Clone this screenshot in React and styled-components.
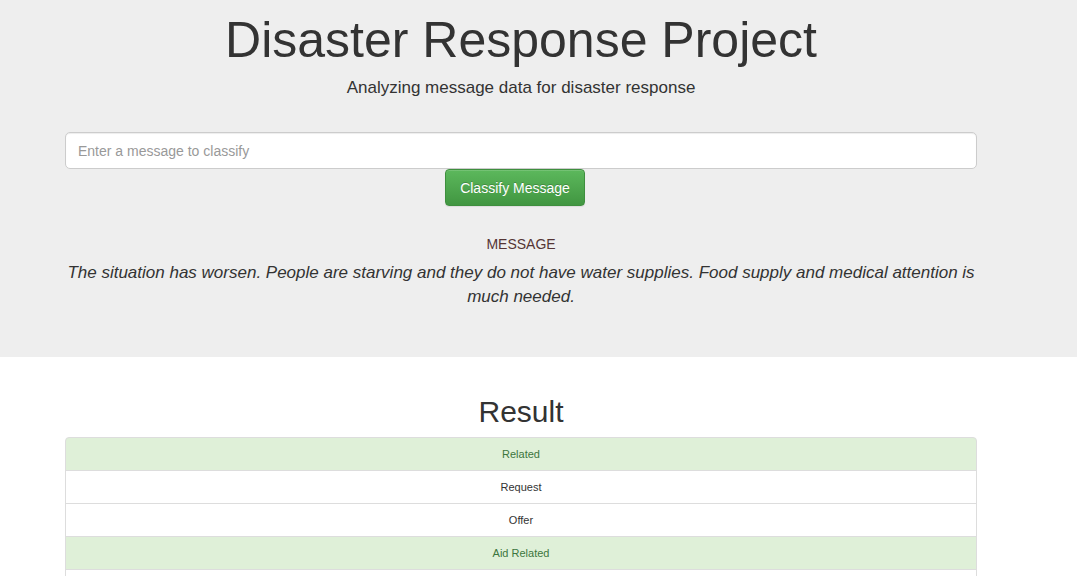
import React from 'react';
import styled, { createGlobalStyle } from 'styled-components';

const GlobalStyles = createGlobalStyle`
  body {
    margin: 0;
    font-family: 'Liberation Sans', Arial, sans-serif;
    color: #333;
    background: #fff;
    overflow: hidden;
  }
`;

const Jumbotron = styled.div`
  background-color: #eee;
  height: 357px;
  box-sizing: border-box;
  padding-top: 8px;
`;

const Container = styled.div`
  width: 912px;
  margin-left: 65px;
  display: flex;
  flex-direction: column;
  align-items: center;
`;

const Title = styled.h1`
  margin: 0;
  font-size: 50px;
  font-weight: 400;
  line-height: 64px;
  color: #333;
`;

const Subtitle = styled.p`
  margin: 4px 0 0;
  font-size: 17px;
  line-height: 24px;
`;

const Form = styled.form`
  margin-top: 32px;
  width: 100%;
  display: flex;
  flex-direction: column;
  align-items: center;
`;

const Input = styled.input`
  width: 100%;
  height: 37px;
  box-sizing: border-box;
  border: 1px solid #ccc;
  border-radius: 5px;
  padding: 0 12px;
  font-family: inherit;
  font-size: 14px;
  color: #555;
  background: #fff;
  box-shadow: inset 0 1px 1px rgba(0, 0, 0, 0.075);
  &::placeholder {
    color: #999;
  }
`;

const Button = styled.button`
  width: 140px;
  height: 37px;
  margin-right: 12px;
  border: 1px solid #3e8f3e;
  border-radius: 4px;
  background-image: linear-gradient(to bottom, #5cb85c 0, #419641 100%);
  color: #fff;
  font-family: inherit;
  font-size: 14px;
  text-shadow: 0 -1px 0 rgba(0, 0, 0, 0.2);
  box-shadow: inset 0 1px 0 rgba(255, 255, 255, 0.15), 0 1px 1px rgba(0, 0, 0, 0.075);
  cursor: pointer;
`;

const Label = styled.div`
  margin-top: 28px;
  font-size: 14px;
  line-height: 20px;
  color: #553535;
`;

const MessageText = styled.p`
  margin: 7px 0 0;
  width: 100%;
  text-align: center;
  font-style: italic;
  font-size: 17px;
  line-height: 24px;
`;

const ResultTitle = styled.h2`
  margin: 35px 0 0;
  font-size: 30px;
  font-weight: 400;
  line-height: 40px;
`;

const List = styled.ul`
  list-style: none;
  margin: 5px 0 0;
  padding: 0;
  width: 100%;
`;

const Item = styled.li`
  height: 34px;
  box-sizing: border-box;
  display: flex;
  align-items: center;
  justify-content: center;
  font-size: 11px;
  border: 1px solid #ddd;
  margin-bottom: -1px;
  background: ${p => (p.$on ? '#dff0d8' : '#fff')};
  color: ${p => (p.$on ? '#3c763d' : '#333')};
  &:first-child {
    border-top-left-radius: 4px;
    border-top-right-radius: 4px;
  }
`;

const categories = [
  { name: 'Related', on: true },
  { name: 'Request', on: false },
  { name: 'Offer', on: false },
  { name: 'Aid Related', on: true },
  { name: 'Medical Help', on: false },
];

const App = () => {
  return (
    <div>
      <GlobalStyles />
      <Jumbotron>
        <Container>
          <Title>Disaster Response Project</Title>
          <Subtitle>Analyzing message data for disaster response</Subtitle>
          <Form onSubmit={e => e.preventDefault()}>
            <Input type="text" placeholder="Enter a message to classify" />
            <Button type="submit">Classify Message</Button>
          </Form>
          <Label>MESSAGE</Label>
          <MessageText>
            The situation has worsen. People are starving and they do not have water supplies. Food supply and medical attention is much needed.
          </MessageText>
        </Container>
      </Jumbotron>
      <Container>
        <ResultTitle>Result</ResultTitle>
        <List>
          {categories.map(c => (
            <Item key={c.name} $on={c.on}>{c.name}</Item>
          ))}
        </List>
      </Container>
    </div>
  );
};

export default App;
